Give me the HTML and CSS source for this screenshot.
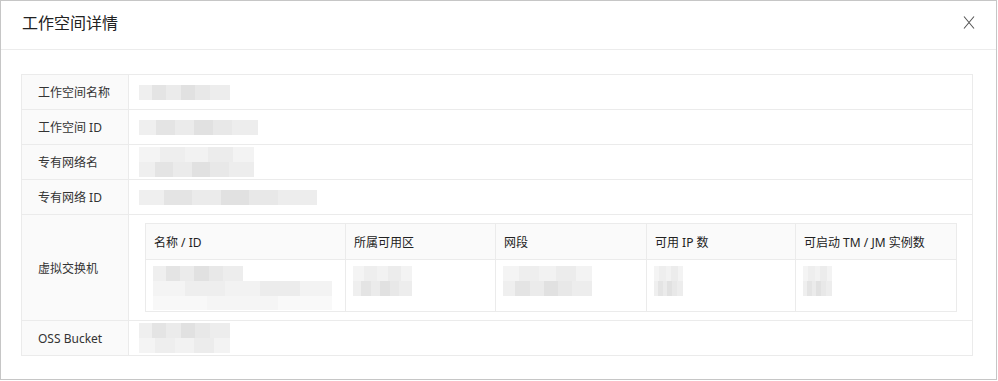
FILE: index.html
```html
<!DOCTYPE html>
<html lang="zh-CN">
<head>
    <meta charset="UTF-8">
    <title>工作空间详情</title>
    <link rel="stylesheet" href="styles.css">
</head>
<body>

<div class="dialog">
    <div class="dialog-header">
        <h2>工作空间详情</h2>
        <span class="close">
            <svg width="12" height="13" viewBox="0 0 12 13"><path d="M1 0.5 L11 12.5 M11 0.5 L1 12.5" stroke="#555" stroke-width="1.1" fill="none"/></svg>
        </span>
    </div>

    <div class="dialog-body">
        <div class="info">
            <div class="row">
                <div class="label">工作空间名称</div>
                <div class="value"><div class="blur w91"></div></div>
            </div>
            <div class="row">
                <div class="label">工作空间 ID</div>
                <div class="value"><div class="blur w119"></div></div>
            </div>
            <div class="row">
                <div class="label">专有网络名</div>
                <div class="value">
                    <div class="stack">
                        <div class="blur w115 light"></div>
                        <div class="blur w115"></div>
                    </div>
                </div>
            </div>
            <div class="row">
                <div class="label">专有网络 ID</div>
                <div class="value"><div class="blur w178"></div></div>
            </div>
            <div class="row row-tall">
                <div class="label">虚拟交换机</div>
                <div class="value value-table">
                    <div class="vsw">
                        <div class="th">名称 / ID</div>
                        <div class="th">所属可用区</div>
                        <div class="th">网段</div>
                        <div class="th">可用 IP 数</div>
                        <div class="th">可启动 TM / JM 实例数</div>

                        <div class="td">
                            <div class="stack">
                                <div class="blur w90"></div>
                                <div class="blur w179 light"></div>
                                <div class="blur w179 faint"></div>
                            </div>
                        </div>
                        <div class="td">
                            <div class="stack">
                                <div class="blur w59 light"></div>
                                <div class="blur w59"></div>
                            </div>
                        </div>
                        <div class="td">
                            <div class="stack">
                                <div class="blur w89 light"></div>
                                <div class="blur w89"></div>
                            </div>
                        </div>
                        <div class="td">
                            <div class="stack">
                                <div class="blur w29 light"></div>
                                <div class="blur w29"></div>
                            </div>
                        </div>
                        <div class="td">
                            <div class="stack">
                                <div class="blur w29 light"></div>
                                <div class="blur w29"></div>
                            </div>
                        </div>
                    </div>
                </div>
            </div>
            <div class="row">
                <div class="label">OSS Bucket</div>
                <div class="value">
                    <div class="stack">
                        <div class="blur w91"></div>
                        <div class="blur w91 light"></div>
                    </div>
                </div>
            </div>
        </div>
    </div>
</div>

</body>
</html>
```

FILE: styles.css
```css
body {
    margin: 0;
    font-family: "Noto Sans", "Noto Sans CJK SC", sans-serif;
    color: #333;
    background-color: #fff;
}
.dialog {
    width: 997px;
    height: 380px;
    box-sizing: border-box;
    border: 1px solid #c6c6c6;
    background-color: #fff;
}
.dialog-header {
    height: 48px;
    border-bottom: 1px solid #ececec;
    display: flex;
    align-items: center;
    justify-content: space-between;
    padding: 0 21px 0 21px;
}
.dialog-header h2 {
    margin: 0;
    font-size: 16px;
    font-weight: normal;
    color: #222;
    line-height: 20px;
    margin-top: -4px;
}
.close {
    display: flex;
    margin-top: -5px;
}
.dialog-body {
    padding: 24px 0 0 20px;
}
.info {
    width: 952px;
    box-sizing: border-box;
    border: 1px solid #ebebeb;
    border-bottom: none;
    font-size: 12px;
}
.row {
    display: flex;
    height: 35px;
    box-sizing: border-box;
    border-bottom: 1px solid #ebebeb;
}
.row-tall {
    height: 106px;
}
.label {
    width: 107px;
    flex-shrink: 0;
    box-sizing: border-box;
    border-right: 1px solid #ebebeb;
    background-color: #fafafa;
    padding-left: 16px;
    display: flex;
    align-items: center;
    color: #333;
}
.value {
    flex: 1;
    display: flex;
    align-items: center;
    padding-left: 10px;
}
.value-table {
    padding: 8px 15px 8px 16px;
    align-items: flex-start;
}
.vsw {
    width: 812px;
    box-sizing: border-box;
    display: grid;
    grid-template-columns: 200px 150px 151px 149px 1fr;
    border-top: 1px solid #ebebeb;
    border-right: 1px solid #ebebeb;
    border-bottom: 1px solid #ebebeb;
}
.th {
    height: 35px;
    border-left: 1px solid #ebebeb;
    border-bottom: 1px solid #ebebeb;
    background-color: #fafafa;
    padding-left: 8px;
    display: flex;
    align-items: center;
    color: #222;
}
.td {
    height: 51px;
    border-left: 1px solid #ebebeb;
    padding: 6px 0 0 7px;
    box-sizing: border-box;
}
.stack {
    display: flex;
    flex-direction: column;
}
.blur {
    height: 15px;
    background: linear-gradient(90deg,
        #efefef 0 14%, #e4e4e4 14% 30%, #ebebeb 30% 46%,
        #e1e1e1 46% 62%, #e8e8e8 62% 78%, #ededed 78% 100%);
}
.blur.light {
    background: linear-gradient(90deg,
        #f4f4f4 0 18%, #eeeeee 18% 40%, #f2f2f2 40% 60%,
        #ececec 60% 82%, #f3f3f3 82% 100%);
}
.blur.faint {
    height: 14px;
    background: linear-gradient(90deg,
        #f8f8f8 0 30%, #f5f5f5 30% 70%, #f9f9f9 70% 100%);
}
.w29 { width: 29px; }
.w59 { width: 59px; }
.w89 { width: 89px; }
.w90 { width: 90px; }
.w91 { width: 91px; }
.w115 { width: 115px; }
.w119 { width: 119px; }
.w178 { width: 178px; }
.w179 { width: 179px; }
```
